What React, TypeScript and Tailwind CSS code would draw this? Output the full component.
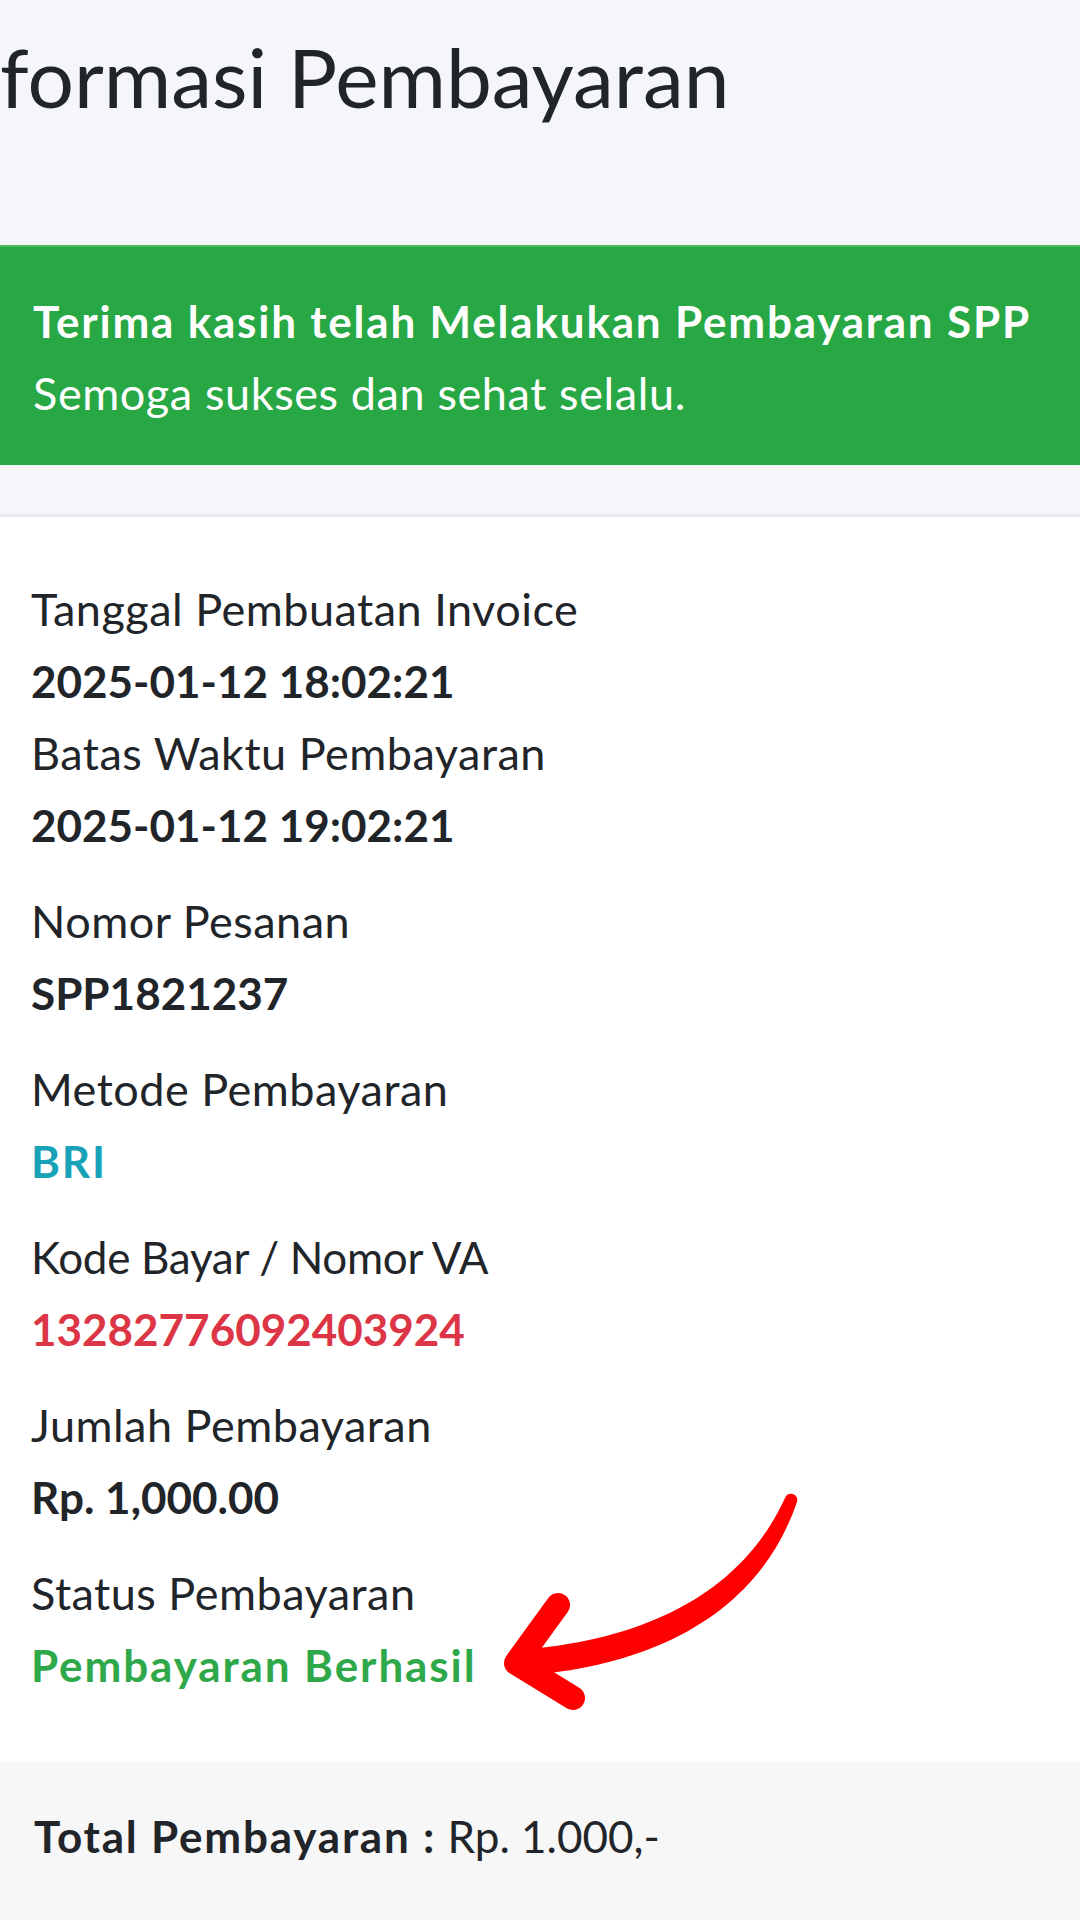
import React from 'react';

interface InfoRow {
  label: string;
  value: string;
  tone?: string;
  wide?: boolean;
  tight?: boolean;
}

const groups: InfoRow[][] = [
  [
    { label: 'Tanggal Pembuatan Invoice', value: '2025-01-12 18:02:21' },
    { label: 'Batas Waktu Pembayaran', value: '2025-01-12 19:02:21' },
  ],
  [{ label: 'Nomor Pesanan', value: 'SPP1821237' }],
  [{ label: 'Metode Pembayaran', value: 'BRI', tone: 'text-[#17a2b8]', wide: true }],
  [{ label: 'Kode Bayar / Nomor VA', value: '13282776092403924', tone: 'text-[#dc3545]', tight: true }],
  [{ label: 'Jumlah Pembayaran', value: 'Rp. 1,000.00' }],
  [{ label: 'Status Pembayaran', value: 'Pembayaran Berhasil', tone: 'text-[#2fa84a]', wide: true }],
];

function Arrow() {
  return (
    <svg
      className="absolute left-[480px] top-[1480px] w-[340px] h-[240px] pointer-events-none"
      viewBox="480 1480 340 240"
    >
      {/* batang panah */}
      <path
        d="M 797 1502 C 760 1610 660 1666 521 1676 L 519 1650 C 648 1640 742 1592 785 1498 A 6 6 0 0 1 797 1502 Z"
        fill="#ff0000"
      />
      {/* kepala panah */}
      <path
        d="M 558 1605 L 516 1663 L 573 1698"
        fill="none"
        stroke="#ff0000"
        strokeWidth="24"
        strokeLinecap="round"
        strokeLinejoin="round"
      />
    </svg>
  );
}

export default function App() {
  return (
    <div className="relative w-[1080px] h-[1920px] overflow-hidden bg-[#f4f6f9] font-['Lato',sans-serif] text-[#212529]">
      {/* Judul */}
      <div className="h-[245px] pt-[26px]">
        <h1 className="text-[82px] leading-[100px] font-normal">formasi Pembayaran</h1>
      </div>

      {/* Alert sukses */}
      <div className="bg-[#28a745] text-white h-[220px] px-[33px] pt-[38px] leading-[72px] border-t-2 border-[#4cbc63]">
        <p className="font-bold text-[44px] tracking-[1.8px]">Terima kasih telah Melakukan Pembayaran SPP</p>
        <p className="text-[45px] tracking-[0.6px]">Semoga sukses dan sehat selalu.</p>
      </div>

      {/* Kartu detail */}
      <div className="mt-[49px] bg-white border-t-[3px] border-[#e9ecef]">
        <div className="pt-[56px] pb-[61px] px-[31px] leading-[72px]">
          {groups.map((group, gi) => (
            <div key={gi} className={gi < groups.length - 1 ? 'mb-[24px]' : ''}>
              {group.map((row) => (
                <div key={row.label}>
                  <p className={row.tight ? 'text-[44px] tracking-[-0.3px]' : 'text-[45px] tracking-[0.5px]'}>
                    {row.label}
                  </p>
                  <p
                    className={`font-bold text-[44px] ${row.wide ? 'tracking-[1.9px]' : ''} ${
                      row.tone ?? ''
                    }`}
                  >
                    {row.value}
                  </p>
                </div>
              ))}
            </div>
          ))}
        </div>

        {/* Footer total */}
        <div className="bg-[#f7f7f7] py-[38px] px-[34px] leading-[72px] border-b-[4px] border-[#dcdcdc]">
          <span className="font-bold text-[44px] tracking-[1.8px]">Total Pembayaran :</span>
          <span className="text-[44px]"> Rp. 1.000,-</span>
        </div>
      </div>

      <Arrow />
    </div>
  );
}
